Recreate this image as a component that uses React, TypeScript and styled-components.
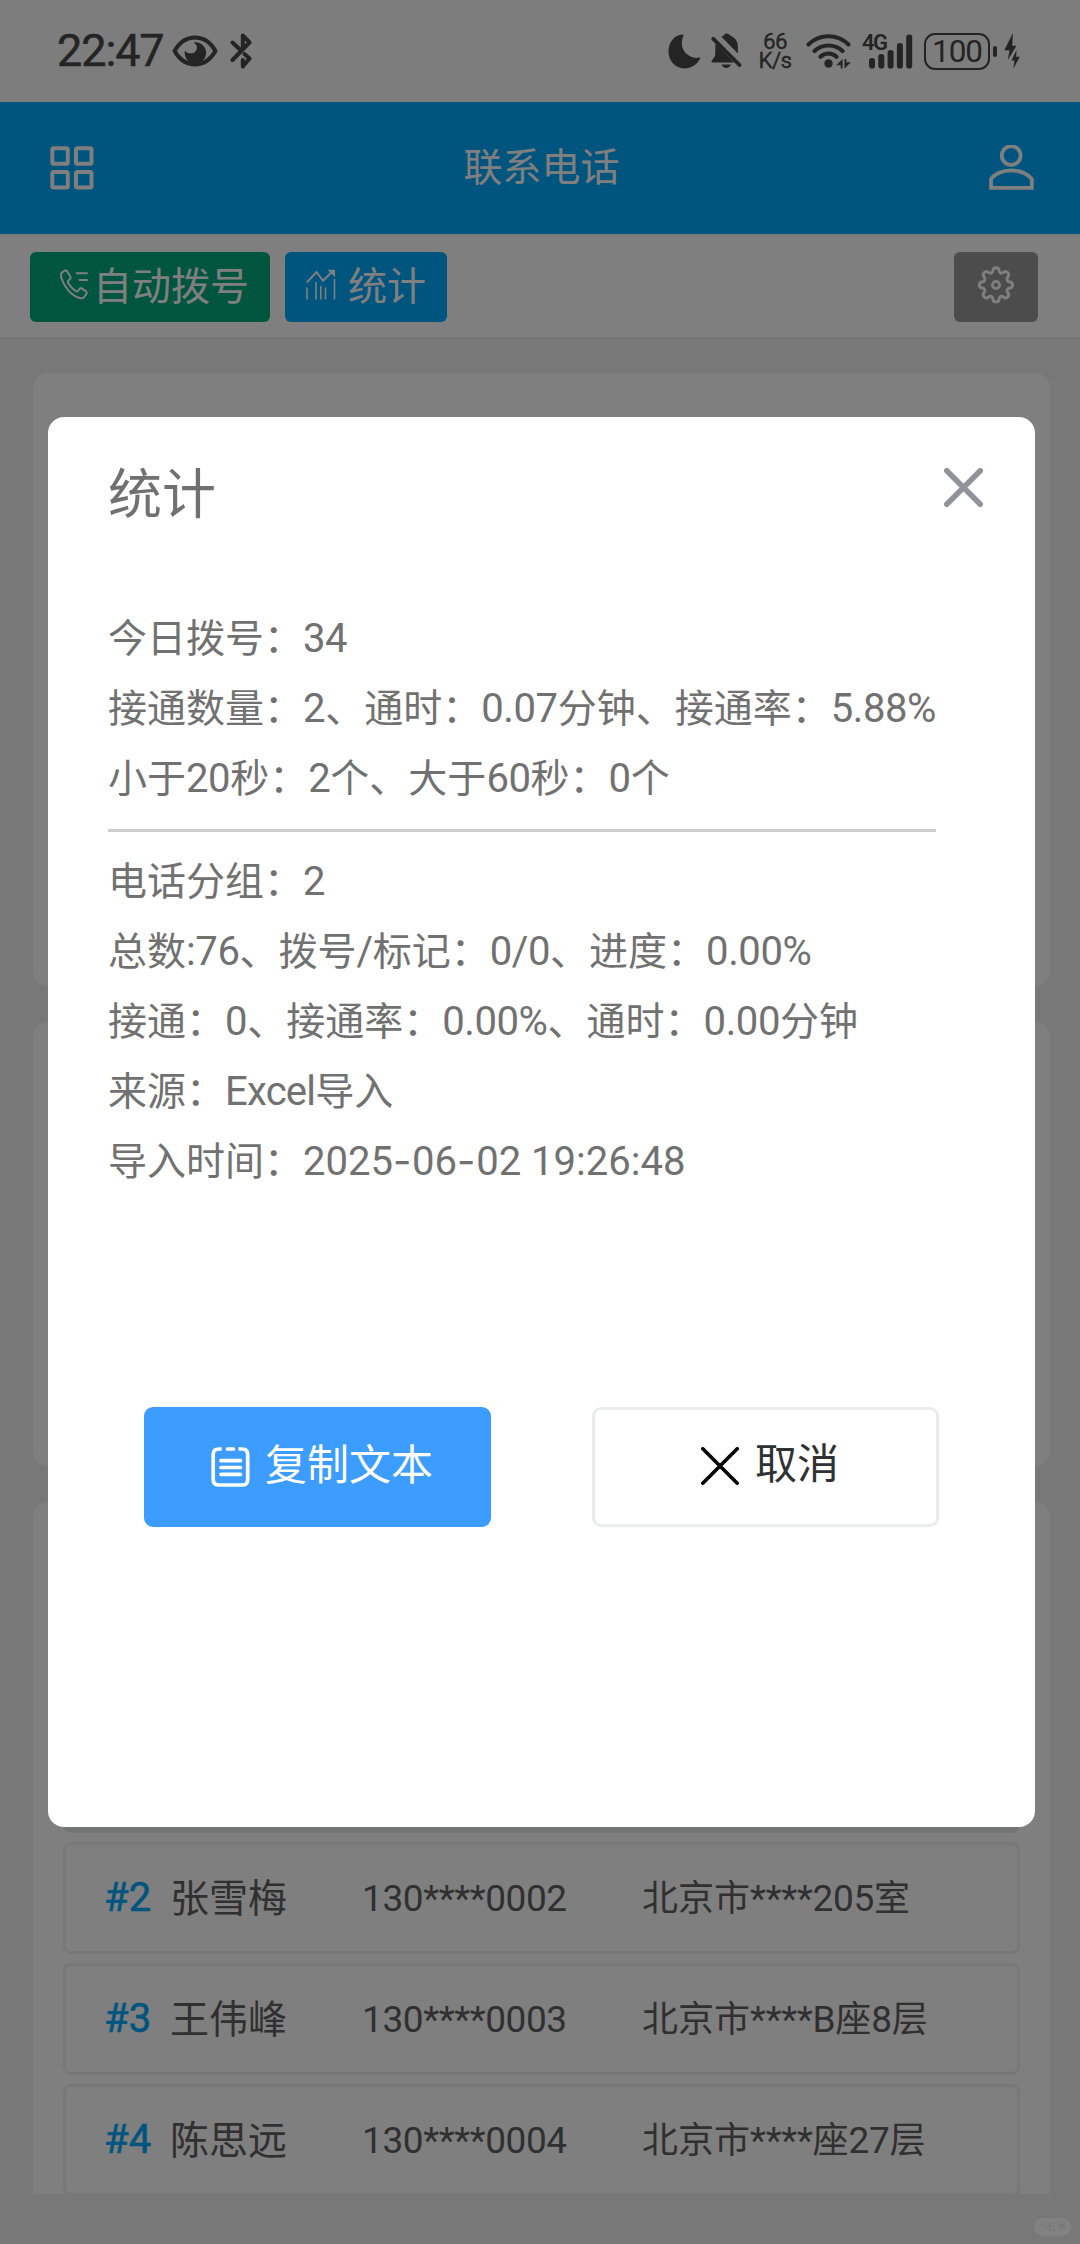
import React from "react";
import styled, { createGlobalStyle } from "styled-components";

const GlobalStyle = createGlobalStyle`
  * { box-sizing: border-box; }
  html, body { margin: 0; padding: 0; }
  body {
    width: 1080px;
    height: 2244px;
    overflow: hidden;
    background: #f0f0f0;
    font-family: "Noto Sans CJK SC", Roboto, sans-serif;
  }
  svg { display: block; flex: none; }
`;

/* ---------- text ---------- */

const Latin = styled.span<{ $tracking: number }>`
  font-family: Roboto, "Noto Sans CJK SC", sans-serif;
  font-size: 1.027em;
  line-height: 0;
  letter-spacing: ${(p) => p.$tracking}px;
`;

const Dash = styled.span`
  font-family: Inter, sans-serif;
  letter-spacing: 0.6px;
`;

const Mixed = ({ children, tracking = -0.4 }: { children: string; tracking?: number }) => (
  <>
    {children.split(/([\x20-\x7e]+)/).map((part, i) =>
      i % 2 ? (
        <Latin key={i} $tracking={tracking}>
          {part.split(/(-)/).map((t, j) => (t === "-" ? <Dash key={j}>-</Dash> : t))}
        </Latin>
      ) : (
        part
      )
    )}
  </>
);

/* ---------- page ---------- */

const Page = styled.div`
  display: flex;
  flex-direction: column;
  width: 1080px;
  height: 2244px;
  background: #f0f0f0;
`;

const StatusBar = styled.div`
  display: flex;
  align-items: center;
  justify-content: space-between;
  height: 102px;
  padding: 0 60px 0 57px;
  background: #fbfbfb;
  color: #484848;
  font-family: Roboto, sans-serif;
`;

const StatusGroup = styled.div`
  display: flex;
  align-items: center;
`;

const Clock = styled.span`
  width: 115px;
  font-size: 45px;
  line-height: 102px;
  letter-spacing: -1.1px;
  -webkit-text-stroke: 0.5px #484848;
`;

const Speed = styled.div`
  width: 34px;
  margin: 0 14px 0 16px;
  font-size: 22.5px;
  line-height: 19px;
  letter-spacing: -0.6px;
  text-align: center;
  -webkit-text-stroke: 0.3px #484848;
`;

const Network = styled.div`
  display: flex;
  width: 51px;
  height: 34px;
  margin: 0 11px 0 10px;
`;

const NetworkType = styled.span`
  width: 6px;
  height: 16px;
  font-size: 22px;
  line-height: 17px;
  font-weight: 600;
  letter-spacing: -1.5px;
  white-space: nowrap;
`;

const Battery = styled.div`
  width: 66px;
  height: 37px;
  border: 2.5px solid #484848;
  border-radius: 11px;
  font-size: 31.5px;
  line-height: 33px;
  letter-spacing: -1px;
  text-align: center;
`;

const BatteryTip = styled.div`
  width: 4px;
  height: 11px;
  margin: 0 7px 0 3px;
  border-radius: 2px;
  background: #484848;
`;

const Header = styled.header`
  display: grid;
  grid-template-columns: 44px 1fr 46px;
  align-items: center;
  height: 132px;
  padding: 0 46px 0 50px;
  background: #00aaff;
  color: #fff;
`;

const HeaderTitle = styled.h1`
  margin: 0;
  font-size: 39px;
  line-height: 56px;
  font-weight: 400;
  text-align: center;
  padding: 0 0 9px 1px;
`;

const Toolbar = styled.div`
  display: flex;
  height: 106px;
  padding: 15px 42px 0 30px;
  gap: 15px;
  background: #fff;
  border-top: 3px solid #f5f5f5;
  border-bottom: 3px solid #ebebeb;
`;

const ToolButton = styled.button<{ $bg: string; $width: number; $pad: number; $gap: number; $end?: boolean }>`
  display: flex;
  align-items: center;
  width: ${(p) => p.$width}px;
  height: 70px;
  padding: 0 0 5px ${(p) => p.$pad}px;
  gap: ${(p) => p.$gap}px;
  margin-left: ${(p) => (p.$end ? "auto" : "0")};
  border: 0;
  border-radius: 6px;
  background: ${(p) => p.$bg};
  color: #fff;
  font-family: inherit;
  font-size: 39px;
  line-height: 60px;
  white-space: nowrap;
`;

const ButtonLabel = styled.span`
  height: 64px;
`;

const Content = styled.main`
  display: flex;
  flex-direction: column;
  gap: 36px;
  height: 1854px;
  padding: 33px 30px 0 33px;
  overflow: hidden;
`;

const Card = styled.section<{ $height: number }>`
  flex: none;
  height: ${(p) => p.$height}px;
  border-radius: 15px;
  background: #fff;
`;

const ContactCard = styled(Card)`
  display: flex;
  flex-direction: column;
  gap: 9px;
  padding: 219px 30px 0 30px;
`;

const ContactRow = styled.div<{ $active?: boolean }>`
  display: grid;
  grid-template-columns: 66px 192px 280px 1fr;
  align-items: center;
  flex: none;
  height: 112px;
  padding: 0 0 6px 38px;
  border: 3px solid ${(p) => (p.$active ? "#e4eeeb" : "#f0f0f0")};
  border-radius: 8px;
  background: ${(p) => (p.$active ? "#e4eeeb" : "#fff")};
  color: #606060;
  font-size: 36px;
  white-space: nowrap;
`;

const Index = styled.span`
  color: #00aaff;
  font-family: Roboto, sans-serif;
  font-size: 40px;
  -webkit-text-stroke: 0.6px #00aaff;
  padding-top: 5px;
`;

const Name = styled.span`
  font-size: 39px;
`;

const Cell = styled.span``;

/* ---------- dialog ---------- */

const Backdrop = styled.div`
  position: fixed;
  inset: 0;
  display: flex;
  padding: 417px 45px 0 48px;
  background: rgba(0, 0, 0, 0.5);
`;

const Dialog = styled.div`
  display: flex;
  flex-direction: column;
  width: 987px;
  height: 1410px;
  padding: 0 48px 0 60px;
  border-radius: 16px;
  background: #fff;
  color: #717171;
`;

const DialogHead = styled.div`
  display: flex;
  justify-content: space-between;
  height: 111px;
  padding: 35px 4px 0 0;
`;

const DialogTitle = styled.h2`
  margin: 0;
  font-size: 54px;
  line-height: 78px;
  font-weight: 400;
`;

const CloseButton = styled.button`
  height: 42px;
  margin-top: 14px;
  padding: 0;
  border: 0;
  background: none;
`;

const Stats = styled.div`
  width: 828px;
  margin-top: 72px;
  font-size: 39px;
`;

const StatLine = styled.p`
  margin: 0;
  height: 70px;
  line-height: 70px;
  white-space: nowrap;
`;

const Divider = styled.hr`
  height: 3px;
  margin: 19px 0 11px;
  border: 0;
  background: #cccccc;
`;

const Actions = styled.div`
  display: flex;
  gap: 101px;
  margin: 214px 0 0 36px;
`;

const Action = styled.button<{ $primary?: boolean }>`
  display: flex;
  align-items: center;
  gap: ${(p) => (p.$primary ? 15 : 16)}px;
  width: 347px;
  height: 120px;
  padding: 0 0 ${(p) => (p.$primary ? 0 : 2)}px ${(p) => (p.$primary ? 64 : 106)}px;
  border: 3px solid ${(p) => (p.$primary ? "#3c9cff" : "#ebedec")};
  border-radius: 9px;
  background: ${(p) => (p.$primary ? "#3c9cff" : "#fff")};
  color: ${(p) => (p.$primary ? "#fff" : "#303133")};
  font-family: inherit;
  font-size: 42px;
`;

const ActionLabel = styled.span`
  height: 70px;
  line-height: 60px;
`;

const Watermark = styled.div`
  position: fixed;
  right: 9px;
  bottom: 8px;
  width: 37px;
  height: 18px;
  border-radius: 9px;
  background: #828282;
  color: #757575;
  font-size: 9px;
  line-height: 18px;
  text-align: center;
`;

/* ---------- icons ---------- */

const EyeIcon = () => (
  <svg width="46" height="34" viewBox="0 0 46 34" fill="none">
    <path d="M2.5 17C8 7.500 15 3.500 23 3.500S38 7.500 43.500 17C38 26.500 31 30.500 23 30.500S8 26.500 2.500 17Z" stroke="#484848" strokeWidth="4" strokeLinejoin="round" />
    <path d="M23 8.200a10.700 10.700 0 1 1-10.100 8.600c3 3.600 9.300 3.300 11.300-.4 1.500-2.900.9-6-2.700-7.700Z" fill="#484848" />
  </svg>
);

const BluetoothIcon = () => (
  <svg width="23" height="36" viewBox="0 0 23 36" fill="none" stroke="#484848" strokeWidth="4" strokeLinecap="round" strokeLinejoin="round">
    <path d="M2.500 9.500 10.500 17M2.500 27 19.500 9.500 12.800 2.500V15M14.500 21 19.500 25.500 12.800 33.500V27" />
  </svg>
);

const MoonIcon = () => (
  <svg width="33" height="35" viewBox="0 0 33 35">
    <path d="M14.500.600C6.500 1 .500 8.200.500 17.600c0 9.400 7 16.900 15.700 16.900 7.400 0 13.800-4.400 15.900-10.300.2-.7-.4-.8-1-.6-9.600 1.900-17.500-6.300-17.200-14.300.1-3.200.7-5.600 1.500-7.500.3-.8-.1-1.200-.9-1.200Z" fill="#484848" />
  </svg>
);

const MutedBellIcon = () => (
  <svg width="31" height="36" viewBox="0 0 31 36" fill="#484848">
    <path d="M10.500 3.800C12 2.700 12.700 2.500 13.500 1.400c1.200-1.200 3.300-1.200 4.500 0 .7 1 1.600 1.200 3.100 2.100 4 2.500 5.700 5.600 5.700 10.200v6.800Z" />
    <path d="M4.800 10.500 23 29.500H1.800c-1.300 0-1.700-1.300-.8-2.300 2.500-2.700 3.300-4.200 3.300-7.200v-5.500c0-1.500.1-2.700.5-4Z" />
    <path d="M10.500 31.500h9.500c-.8 2.300-2.500 3.500-4.700 3.500s-4-1.200-4.800-3.500Z" />
    <path d="M2.300 5.800 28.500 32" stroke="#484848" strokeWidth="3.800" strokeLinecap="round" />
  </svg>
);

const WifiIcon = () => (
  <svg width="46" height="36" viewBox="0 0 46 36" fill="none" stroke="#484848" strokeWidth="4" strokeLinecap="round">
    <path d="M2.500 11.500C13.500.500 31.500.500 42.500 11.500M8.500 18C16 10.500 29 10.500 36.500 18M14.500 23.800c4.500-4.300 11.500-4.300 16 0" />
    <circle cx="22.500" cy="30.500" r="4.200" fill="#484848" stroke="none" />
    <path d="M36.500 26v9.500h-1.800v-3.200h-4.500ZM38.500 35.500V26h1.800v3.200h4.500Z" fill="#484848" stroke="none" />
  </svg>
);

const SignalIcon = () => (
  <svg width="45" height="35" viewBox="0 0 45 35" fill="#484848">
    <rect x="1" y="24" width="6" height="10.500" rx="2.800" />
    <rect x="10.300" y="20" width="6" height="14.500" rx="2.800" />
    <rect x="19.600" y="16" width="6" height="18.500" rx="2.800" />
    <rect x="28.900" y="9" width="6" height="25.500" rx="2.800" />
    <rect x="38.200" y="0.500" width="6" height="34" rx="2.800" />
  </svg>
);

const ChargeIcon = () => (
  <svg width="16" height="36" viewBox="0 0 16 36" fill="#484848">
    <path d="M9 0 .300 17.300h5.200L3.800 27 12.500 12.800H8.200Z" />
    <path d="M12.500 17 7.500 27.500h3L9.300 35.800 15.800 23.800h-3.600Z" />
  </svg>
);

const GridIcon = () => (
  <svg width="44" height="44" viewBox="0 0 44 44" fill="none" stroke="#fff" strokeWidth="4">
    <rect x="2.300" y="2.300" width="15.500" height="15.500" rx="1.500" />
    <rect x="26" y="2.300" width="15.500" height="15.500" rx="1.500" />
    <rect x="2.300" y="26" width="15.500" height="15.500" rx="1.500" />
    <rect x="26" y="26" width="15.500" height="15.500" rx="1.500" />
  </svg>
);

const PersonIcon = () => (
  <svg width="46" height="46" viewBox="0 0 46 46" fill="none" stroke="#fff" strokeWidth="3.800">
    <circle cx="23.200" cy="10.500" r="9.400" />
    <path d="M3 42.800V34C6.500 29 14.500 25.400 23.200 25.400S40 29 43.800 34V42.800Z" />
  </svg>
);

const DialIcon = () => (
  <svg width="28" height="31" viewBox="0 0 28 31" fill="none" stroke="#fff" strokeWidth="2" strokeLinecap="round" strokeLinejoin="round">
    <path d="M2.200 3.300 4.600 1.700c1-.6 2-.3 2.700.7l3 5c.6 1 .4 1.900-.4 2.700l-1.600 1.700c-.6.700-.5 1.500-.1 2.300 1.800 3.300 4.300 6 7.600 8 .9.500 1.700.4 2.300-.3l1.500-1.900c.7-.9 1.700-1 2.600-.3l3.700 2.700c.9.700 1 1.700.4 2.600l-1.600 2.600c-1.300 1.900-3.300 2.100-5.800 1.300C11.500 26.500 4.500 18.500 1.300 9 .500 6.500.600 4.800 2.200 3.300Z" />
    <path d="M16.500 4.300H27M19.500 11H27" />
  </svg>
);

const ChartIcon = () => (
  <svg width="30" height="31" viewBox="0 0 30 31" fill="none" stroke="#fff" strokeWidth="1.600">
    <path d="M1 30.500V18.500M10 30.500V13M14.800 30.500V17M19.500 30.500V18.500M28.500 30.500V10" />
    <path d="M.800 13.500 10.500 3l6.500 8.800L27 2" strokeWidth="1.900" />
    <path d="M21.500 .700h7.500v7.500Z" fill="#fff" stroke="none" />
  </svg>
);

const GearIcon = () => (
  <svg width="38" height="38" viewBox="0 0 38 38" fill="none" stroke="#fff" strokeWidth="2.900" strokeLinejoin="round">
    <path d="M16 4.200C16.300 1 21.700 1 22 4.200c.3 3.200 2.300 4 4.800 2 2.600-2.100 6.400 1.700 4.300 4.300-2 2.500-1.300 5.200 2 5.500 3.200.3 3.200 5.700 0 6-3.200.3-4 2.500-2 5 2.100 2.600-1.700 6.400-4.300 4.300-2.500-2-4.500-1.100-4.800 2.200-.3 3.200-5.700 3.200-6 0-.3-3.300-2.400-4.200-4.900-2.200-2.600 2.100-6.400-1.700-4.300-4.300 2-2.500 1.200-4.700-2-5-3.200-.3-3.200-5.700 0-6 3.300-.3 4-3 2-5.500C4.700 7.900 8.500 4.100 11.100 6.200c2.500 2 4.600 1.200 4.900-2Z" />
    <circle cx="19" cy="19" r="3.600" />
  </svg>
);

const CloseIcon = ({ size, width, color }: { size: number; width: number; color: string }) => (
  <svg width={size} height={size} viewBox={`0 0 ${size} ${size}`} stroke={color} strokeWidth={width} strokeLinecap="round">
    <path d={`M${width / 2} ${width / 2} L${size - width / 2} ${size - width / 2} M${size - width / 2} ${width / 2} L${width / 2} ${size - width / 2}`} />
  </svg>
);

const NoteIcon = () => (
  <svg width="39" height="40" viewBox="0 0 39 40" fill="none" stroke="#fff" strokeWidth="3.700">
    <path d="M10.700 2H8C4 2 2.200 4 2.200 7.500V32.500C2.200 36.500 4 38 8 38H31C35 38 36.700 36.500 36.700 32.500V7.500C36.700 4 35 2 31 2H27.500" />
    <path d="M16.500 2H22.500M10 13.700H29.500M10 20.500H29.500M10 27.300H29.500" strokeLinecap="round" />
  </svg>
);

/* ---------- data ---------- */

const contacts = [
  { id: 1, name: "", phone: "", address: "" },
  { id: 2, name: "张雪梅", phone: "130****0002", address: "北京市****205室" },
  { id: 3, name: "王伟峰", phone: "130****0003", address: "北京市****B座8层" },
  { id: 4, name: "陈思远", phone: "130****0004", address: "北京市****座27层" },
];

const today = [
  { text: "今日拨号：34" },
  { text: "接通数量：2、通时：0.07分钟、接通率：5.88%" },
  { text: "小于20秒：2个、大于60秒：0个" },
];

const group = [
  { text: "电话分组：2" },
  { text: "总数:76、拨号/标记：0/0、进度：0.00%" },
  { text: "接通：0、接通率：0.00%、通时：0.00分钟" },
  { text: "来源：Excel导入", tracking: -0.8 },
  { text: "导入时间：2025-06-02 19:26:48", tracking: 0 },
];

const Spacer = styled.span<{ $w: number }>`
  width: ${(p) => p.$w}px;
`;

export default function App() {
  return (
    <>
      <GlobalStyle />
      <Page>
        <StatusBar>
          <StatusGroup>
            <Clock>22:47</Clock>
            <EyeIcon />
            <Spacer $w={12} />
            <BluetoothIcon />
          </StatusGroup>
          <StatusGroup>
            <MoonIcon />
            <Spacer $w={10} />
            <MutedBellIcon />
            <Speed>
              66
              <br />
              K/s
            </Speed>
            <WifiIcon />
            <Network>
              <NetworkType>4G</NetworkType>
              <SignalIcon />
            </Network>
            <Battery>100</Battery>
            <BatteryTip />
            <ChargeIcon />
          </StatusGroup>
        </StatusBar>
        <Header>
          <GridIcon />
          <HeaderTitle>联系电话</HeaderTitle>
          <PersonIcon />
        </Header>
        <Toolbar>
          <ToolButton $bg="#00aa7f" $width={240} $pad={30} $gap={5}>
            <DialIcon />
            <ButtonLabel>自动拨号</ButtonLabel>
          </ToolButton>
          <ToolButton $bg="#00aaff" $width={162} $pad={21} $gap={12}>
            <ChartIcon />
            <ButtonLabel>统计</ButtonLabel>
          </ToolButton>
          <ToolButton $bg="#999999" $width={84} $pad={23} $gap={0} $end>
            <GearIcon />
          </ToolButton>
        </Toolbar>
        <Content>
          <Card $height={613} />
          <Card $height={444} />
          <ContactCard $height={815}>
            {contacts.map((c) => (
              <ContactRow key={c.id} $active={c.id === 1}>
                {c.name && (
                  <>
                    <Index>#{c.id}</Index>
                    <Name>{c.name}</Name>
                    <Cell>
                      <Mixed>{c.phone}</Mixed>
                    </Cell>
                    <Cell>
                      <Mixed tracking={-0.3}>{c.address}</Mixed>
                    </Cell>
                  </>
                )}
              </ContactRow>
            ))}
          </ContactCard>
        </Content>
      </Page>
      <Backdrop>
        <Dialog>
          <DialogHead>
            <DialogTitle>统计</DialogTitle>
            <CloseButton>
              <CloseIcon size={39} width={5.5} color="#909399" />
            </CloseButton>
          </DialogHead>
          <Stats>
            {today.map((line) => (
              <StatLine key={line.text}>
                <Mixed>{line.text}</Mixed>
              </StatLine>
            ))}
            <Divider />
            {group.map((line) => (
              <StatLine key={line.text}>
                <Mixed tracking={line.tracking}>{line.text}</Mixed>
              </StatLine>
            ))}
          </Stats>
          <Actions>
            <Action $primary>
              <NoteIcon />
              <ActionLabel>复制文本</ActionLabel>
            </Action>
            <Action>
              <CloseIcon size={38} width={3.6} color="#000" />
              <ActionLabel>取消</ActionLabel>
            </Action>
          </Actions>
        </Dialog>
      </Backdrop>
      <Watermark>小红书</Watermark>
    </>
  );
}
